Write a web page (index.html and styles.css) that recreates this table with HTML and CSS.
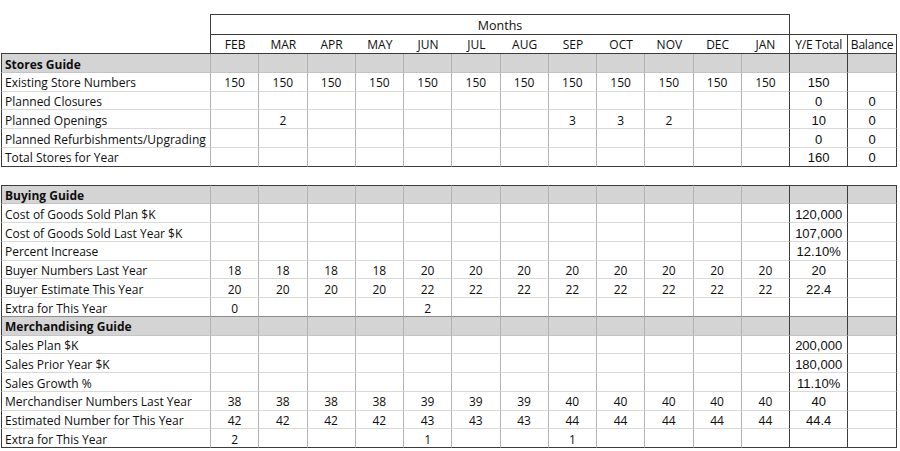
FILE: index.html
```html
<!DOCTYPE html>
<html lang="en">
<head>
<meta charset="utf-8">
<title>Store Planning Guide</title>
<link rel="stylesheet" href="styles.css">
</head>
<body>
<table class="sheet">
  <colgroup>
    <col class="c-label">
    <col class="c-m"><col class="c-m"><col class="c-m"><col class="c-m"><col class="c-m"><col class="c-m">
    <col class="c-m"><col class="c-m"><col class="c-m"><col class="c-m"><col class="c-m"><col class="c-m">
    <col class="c-tot">
    <col class="c-bal">
  </colgroup>
  <thead>
    <tr class="h1">
      <td class="lbl"></td>
      <th class="months" colspan="12">Months</th>
      <td class="tot"></td>
      <td class="bal"></td>
    </tr>
    <tr class="h2">
      <td class="lbl"></td>
      <th>FEB</th><th>MAR</th><th>APR</th><th>MAY</th><th>JUN</th><th>JUL</th>
      <th>AUG</th><th>SEP</th><th>OCT</th><th>NOV</th><th>DEC</th><th class="jan">JAN</th>
      <th class="tot">Y/E Total</th>
      <th class="bal">Balance</th>
    </tr>
  </thead>
  <tbody class="section">
    <tr class="group"><td class="lbl">Stores Guide</td><td></td><td></td><td></td><td></td><td></td><td></td><td></td><td></td><td></td><td></td><td></td><td class="jan"></td><td class="tot"></td><td class="bal"></td></tr>
    <tr><td class="lbl">Existing Store Numbers</td><td>150</td><td>150</td><td>150</td><td>150</td><td>150</td><td>150</td><td>150</td><td>150</td><td>150</td><td>150</td><td>150</td><td class="jan">150</td><td class="tot">150</td><td class="bal"></td></tr>
    <tr><td class="lbl">Planned Closures</td><td></td><td></td><td></td><td></td><td></td><td></td><td></td><td></td><td></td><td></td><td></td><td class="jan"></td><td class="tot">0</td><td class="bal">0</td></tr>
    <tr><td class="lbl">Planned Openings</td><td></td><td>2</td><td></td><td></td><td></td><td></td><td></td><td>3</td><td>3</td><td>2</td><td></td><td class="jan"></td><td class="tot">10</td><td class="bal">0</td></tr>
    <tr><td class="lbl">Planned Refurbishments/Upgrading</td><td></td><td></td><td></td><td></td><td></td><td></td><td></td><td></td><td></td><td></td><td></td><td class="jan"></td><td class="tot">0</td><td class="bal">0</td></tr>
    <tr class="last"><td class="lbl">Total Stores for Year</td><td></td><td></td><td></td><td></td><td></td><td></td><td></td><td></td><td></td><td></td><td></td><td class="jan"></td><td class="tot">160</td><td class="bal">0</td></tr>
  </tbody>
  <tbody>
    <tr class="gap"><td colspan="15"></td></tr>
  </tbody>
  <tbody class="section">
    <tr class="group first"><td class="lbl">Buying Guide</td><td></td><td></td><td></td><td></td><td></td><td></td><td></td><td></td><td></td><td></td><td></td><td class="jan"></td><td class="tot"></td><td class="bal"></td></tr>
    <tr><td class="lbl">Cost of Goods Sold Plan $K</td><td></td><td></td><td></td><td></td><td></td><td></td><td></td><td></td><td></td><td></td><td></td><td class="jan"></td><td class="tot">120,000</td><td class="bal"></td></tr>
    <tr><td class="lbl">Cost of Goods Sold Last Year $K</td><td></td><td></td><td></td><td></td><td></td><td></td><td></td><td></td><td></td><td></td><td></td><td class="jan"></td><td class="tot">107,000</td><td class="bal"></td></tr>
    <tr><td class="lbl">Percent Increase</td><td></td><td></td><td></td><td></td><td></td><td></td><td></td><td></td><td></td><td></td><td></td><td class="jan"></td><td class="tot">12.10%</td><td class="bal"></td></tr>
    <tr><td class="lbl">Buyer Numbers Last Year</td><td>18</td><td>18</td><td>18</td><td>18</td><td>20</td><td>20</td><td>20</td><td>20</td><td>20</td><td>20</td><td>20</td><td class="jan">20</td><td class="tot">20</td><td class="bal"></td></tr>
    <tr><td class="lbl">Buyer Estimate This Year</td><td>20</td><td>20</td><td>20</td><td>20</td><td>22</td><td>22</td><td>22</td><td>22</td><td>22</td><td>22</td><td>22</td><td class="jan">22</td><td class="tot">22.4</td><td class="bal"></td></tr>
    <tr class="pre-group"><td class="lbl">Extra for This Year</td><td>0</td><td></td><td></td><td></td><td>2</td><td></td><td></td><td></td><td></td><td></td><td></td><td class="jan"></td><td class="tot"></td><td class="bal"></td></tr>
    <tr class="group"><td class="lbl">Merchandising Guide</td><td></td><td></td><td></td><td></td><td></td><td></td><td></td><td></td><td></td><td></td><td></td><td class="jan"></td><td class="tot"></td><td class="bal"></td></tr>
    <tr><td class="lbl">Sales Plan $K</td><td></td><td></td><td></td><td></td><td></td><td></td><td></td><td></td><td></td><td></td><td></td><td class="jan"></td><td class="tot">200,000</td><td class="bal"></td></tr>
    <tr><td class="lbl">Sales Prior Year $K</td><td></td><td></td><td></td><td></td><td></td><td></td><td></td><td></td><td></td><td></td><td></td><td class="jan"></td><td class="tot">180,000</td><td class="bal"></td></tr>
    <tr><td class="lbl">Sales Growth %</td><td></td><td></td><td></td><td></td><td></td><td></td><td></td><td></td><td></td><td></td><td></td><td class="jan"></td><td class="tot">11.10%</td><td class="bal"></td></tr>
    <tr><td class="lbl">Merchandiser Numbers Last Year</td><td>38</td><td>38</td><td>38</td><td>38</td><td>39</td><td>39</td><td>39</td><td>40</td><td>40</td><td>40</td><td>40</td><td class="jan">40</td><td class="tot">40</td><td class="bal"></td></tr>
    <tr><td class="lbl">Estimated Number for This Year</td><td>42</td><td>42</td><td>42</td><td>42</td><td>43</td><td>43</td><td>43</td><td>44</td><td>44</td><td>44</td><td>44</td><td class="jan">44</td><td class="tot">44.4</td><td class="bal"></td></tr>
    <tr class="last"><td class="lbl">Extra for This Year</td><td>2</td><td></td><td></td><td></td><td>1</td><td></td><td></td><td>1</td><td></td><td></td><td></td><td class="jan"></td><td class="tot"></td><td class="bal"></td></tr>
  </tbody>
</table>
</body>
</html>
```

FILE: styles.css
```css
html, body {
  margin: 0;
  background: #ffffff;
}

body {
  padding: 14px 0 0 1px;
  font-family: "Open Sans", "Liberation Sans", sans-serif;
  font-size: 12px;
  color: #0e0e0e;
}

.sheet {
  border-collapse: separate;
  border-spacing: 0;
  table-layout: fixed;
  width: 896px;
}

.c-label { width: 210px; }
.c-m { width: 48.25px; }
.c-tot { width: 58px; }
.c-bal { width: 49px; }

.sheet td,
.sheet th {
  box-sizing: border-box;
  padding: 2.5px 0 0 0;
  height: 18.75px;
  line-height: 15px;
  text-align: center;
  vertical-align: top;
  font-weight: 500;
  white-space: nowrap;
  overflow: hidden;
}

/* header rows */
.h1 td, .h1 th { height: 21px; }
.h2 td, .h2 th { height: 19px; padding-top: 2px; }

.h1 .lbl, .h2 .lbl { border-right: 1px solid #3c3c3c; }
.h1 .months {
  border-top: 1px solid #3c3c3c;
  border-right: 1px solid #3c3c3c;
  border-bottom: 1px solid #3c3c3c;
  padding-top: 3px;
  font-size: 12.5px;
}
.h1 .tot, .h1 .bal { border-bottom: 1px solid #3c3c3c; }

.h2 td, .h2 th { border-bottom: 1px solid #3c3c3c; }
.h2 .jan, .h2 .tot, .h2 .bal { border-right: 1px solid #3c3c3c; }
.h2 .tot, .h2 .bal { letter-spacing: -0.2px; }

/* body sections */
.section td {
  border-right: 1px solid #b3b3b3;
  border-bottom: 1px solid #d9d9d9;
}
.section td.lbl {
  text-align: left;
  padding-left: 3px;
  border-left: 1px solid #3c3c3c;
}
.section td.jan,
.section td.tot,
.section td.bal {
  border-right-color: #3c3c3c;
}
.section td.tot,
.section td.bal {
  font-family: "Liberation Sans", Arial, sans-serif;
  font-size: 13px;
  font-weight: 400;
}
.section tr.first td { border-top: 1px solid #3c3c3c; height: 19.75px; }
.section tr.last td { border-bottom-color: #3c3c3c; }
.section tr.pre-group td { border-bottom-color: #8c8c8c; }

.section tr.group td {
  background: #d4d4d4;
  border-bottom-color: #c4c4c4;
}
.section tr.group td.lbl { font-weight: 700; }

.gap td {
  height: 18px;
  padding: 0;
  border: 0;
}
```
